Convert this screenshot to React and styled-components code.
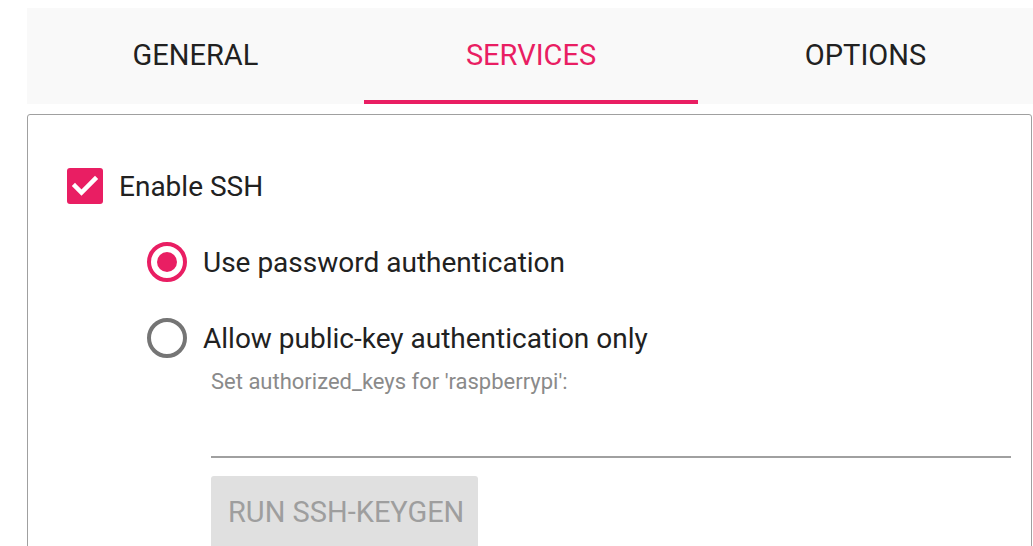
import React, { useState } from 'react'
import styled, { createGlobalStyle } from 'styled-components'

const pink = '#e91e63'

const GlobalStyle = createGlobalStyle`
  html, body {
    margin: 0;
    padding: 0;
    background: #ffffff;
    font-family: Roboto, "Liberation Sans", sans-serif;
    overflow: hidden;
  }
`

const Page = styled.div`
  padding: 8px 0 0 27px;
  width: 1033px;
  height: 546px;
  box-sizing: border-box;
  overflow: hidden;
`

const TabBar = styled.div`
  display: grid;
  grid-template-columns: 337px 334px 335px;
  height: 96px;
  background: #f9f9f9;
`

const Tab = styled.div`
  display: flex;
  align-items: center;
  justify-content: center;
  padding-top: 2px;
  font-size: 29px;
  color: ${p => p.active ? pink : '#212121'};
  border-bottom: 4px solid ${p => p.active ? pink : 'transparent'};
  cursor: pointer;
`

const Panel = styled.div`
  margin-top: 10px;
  width: 1005px;
  height: 500px;
  box-sizing: border-box;
  border: 1px solid #a0a0a0;
  border-radius: 3px;
  padding: 53px 0 0 39px;
`

const CheckRow = styled.label`
  display: flex;
  align-items: center;
  gap: 16px;
  height: 36px;
  font-size: 28px;
  color: #212121;
`

const CheckBox = styled.span`
  display: flex;
  align-items: center;
  justify-content: center;
  width: 36px;
  height: 36px;
  border-radius: 3px;
  background: ${pink};
`

const RadioGroup = styled.div`
  display: flex;
  flex-direction: column;
  gap: 36px;
  margin: 38px 0 0 80px;
`

const RadioRow = styled.label`
  display: flex;
  align-items: center;
  gap: 16px;
  height: 40px;
  font-size: 28px;
  color: #212121;
  cursor: pointer;
`

const RadioCircle = styled.span`
  display: flex;
  align-items: center;
  justify-content: center;
  width: 40px;
  height: 40px;
  box-sizing: border-box;
  border-radius: 50%;
  border: 4px solid ${p => p.checked ? pink : '#757575'};
  &::after {
    content: '';
    width: 20px;
    height: 20px;
    border-radius: 50%;
    background: ${p => p.checked ? pink : 'transparent'};
  }
`

const KeysBlock = styled.div`
  display: flex;
  flex-direction: column;
  align-items: flex-start;
  margin: 12px 0 0 144px;
`

const FieldLabel = styled.div`
  font-size: 22px;
  line-height: 24px;
  color: #8a8a8a;
`

const KeyInput = styled.div`
  width: 800px;
  height: 62px;
  border-bottom: 2px solid #a0a0a0;
`

const KeygenButton = styled.button`
  margin-top: 18px;
  width: 267px;
  height: 72px;
  border: none;
  border-radius: 3px;
  background: #e0e0e0;
  color: #9e9e9e;
  font-family: Roboto, "Liberation Sans", sans-serif;
  font-size: 29px;
  text-align: left;
  padding: 0 0 0 17px;
`

const CheckMark = () => (
  <svg width="36" height="36" viewBox="0 0 36 36">
    <path d="M8 18 L14.5 24.5 L28 11" fill="none" stroke="#fff" strokeWidth="4.5" strokeLinecap="square" />
  </svg>
)

export default function App() {
  const [tab, setTab] = useState('SERVICES')
  const [auth, setAuth] = useState('password')

  return (
    <Page>
      <GlobalStyle />
      <TabBar>
        {['GENERAL', 'SERVICES', 'OPTIONS'].map(t => (
          <Tab key={t} active={t === tab} onClick={() => setTab(t)}>{t}</Tab>
        ))}
      </TabBar>
      <Panel>
        <CheckRow>
          <CheckBox><CheckMark /></CheckBox>
          Enable SSH
        </CheckRow>
        <RadioGroup>
          <RadioRow onClick={() => setAuth('password')}>
            <RadioCircle checked={auth === 'password'} />
            Use password authentication
          </RadioRow>
          <RadioRow onClick={() => setAuth('key')}>
            <RadioCircle checked={auth === 'key'} />
            Allow public-key authentication only
          </RadioRow>
        </RadioGroup>
        <KeysBlock>
          <FieldLabel>Set authorized_keys for 'raspberrypi':</FieldLabel>
          <KeyInput />
          <KeygenButton disabled>RUN SSH-KEYGEN</KeygenButton>
        </KeysBlock>
      </Panel>
    </Page>
  )
}
